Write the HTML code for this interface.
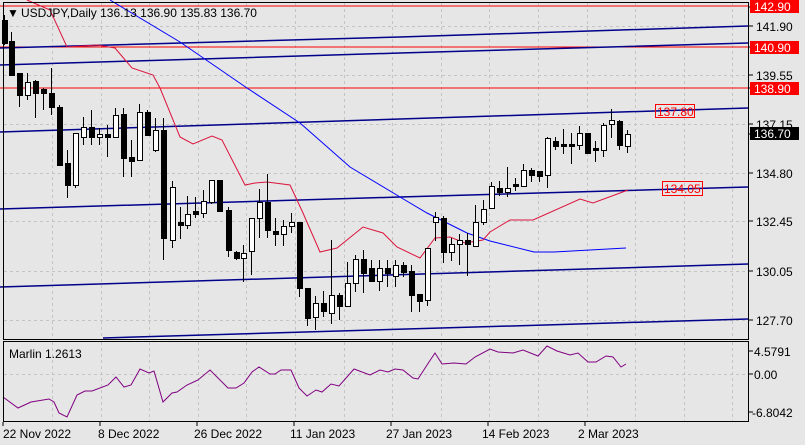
<!DOCTYPE html>
<html><head><meta charset="utf-8"><style>
html,body{margin:0;padding:0;background:#e6e6e6;width:805px;height:445px;overflow:hidden}
svg{display:block}
text{font-family:"Liberation Sans",sans-serif;font-size:12px}
</style></head><body>
<svg id="s" width="805" height="445" xmlns="http://www.w3.org/2000/svg">
<rect x="0" y="0" width="805" height="445" fill="#e6e6e6"/>
<g id="grid" stroke="#c4c4c4" stroke-dasharray="3,3" stroke-width="1"></g>
<g fill="none" stroke-width="1">
<polyline stroke="#ff0000" points="0,6 748,6"/>
<polyline stroke="#ff0000" points="0,47 748,47"/>
<polyline stroke="#ff0000" points="0,88 748,88"/>
</g>
<g fill="none" stroke="#00008b" stroke-width="1.5">
<polyline points="0,48 400,37 748,26"/>
<polyline points="0,65 400,53 748,43"/>
<polyline points="0,132 400,119 748,108"/>
<polyline points="0,209 400,197 748,187"/>
<polyline points="0,287 748,264"/>
<polyline points="103,338 748,319"/>
</g>
<polyline fill="none" stroke="#0000ff" stroke-width="1" points="110,0 180,42 247,88 300,123 350,167 400,197 427,213 467,233 490,241 534,252 554,252 626,248"/>
<polyline fill="none" stroke="#dc143c" stroke-width="1" points="27,0 50,10 67,47 97,45 115,48 132,68 153,75 160,88 180,137 193,144 212,136 222,140 245,185 255,183 267,182 290,185 297,200 303,213 320,252 337,248 363,227 383,233 397,247 420,258 435,238 450,237 465,243 483,240 490,232 510,220 533,220 580,199 593,203 620,193 628,190"/>
<g id="c"></g>
<rect x="655.5" y="104.5" width="39" height="13" fill="none" stroke="#ff0000"/>
<text x="657" y="116" fill="#ff0000">137.80</text>
<rect x="662.5" y="181.5" width="40" height="14" fill="none" stroke="#ff0000"/>
<text x="664" y="193" fill="#ff0000">134.05</text>
<polyline fill="none" stroke="#800080" stroke-width="1" points="3,397 18,408 31,402 49,399 54,402 59,413 67,417 77,395 85,391 92,391 108,385 116,377 124,387 131,385 140,369 149,373 154,371 163,402 172,393 177,392 187,385 198,380 210,370 228,388 236,388 244,383 252,372 259,367 270,374 275,374 281,370 291,370 299,388 307,396 316,390 322,392 331,384 339,386 354,369 370,375 380,370 388,372 395,369 403,370 413,378 418,379 429,362 435,353 442,364 454,363 466,364 475,357 490,349 498,352 513,353 523,350 538,356 547,346 557,351 570,355 578,353 588,362 596,362 606,356 613,357 621,367 626,364"/>
<!-- frames -->
<rect x="3.5" y="2.5" width="745" height="337" fill="none" stroke="#000"/>
<rect x="3.5" y="341.5" width="745" height="80" fill="none" stroke="#000"/>
<path d="M3 422v4M100 422v4M197 422v4M294 422v4M391 422v4M488 422v4M585 422v4M749 7h4M749 26h4M749 47h4M749 75h4M749 88h4M749 124h4M749 134h4M749 173h4M749 221h4M749 271h4M749 320h4M749 351h4M749 374h4M749 412h4" stroke="#000"/>
<text x="7" y="17" fill="#000">▼</text>
<text x="21" y="17" fill="#000">USDJPY,Daily  136.13 136.90 135.83 136.70</text>
<text x="9" y="358" fill="#000">Marlin 1.2613</text>
<rect x="750" y="0" width="49" height="13" fill="#ff0000"/><text x="754" y="11" fill="#fff">142.90</text>
<text x="756" y="31" fill="#000">141.90</text>
<rect x="750" y="41" width="49" height="13" fill="#ff0000"/><text x="754" y="52" fill="#fff">140.90</text>
<text x="756" y="80" fill="#000">139.55</text>
<rect x="750" y="82" width="49" height="13" fill="#ff0000"/><text x="754" y="93" fill="#fff">138.90</text>
<text x="756" y="129" fill="#000">137.15</text>
<rect x="750" y="127" width="49" height="13" fill="#000"/><text x="754" y="138" fill="#fff">136.70</text>
<text x="756" y="178" fill="#000">134.80</text>
<text x="756" y="226" fill="#000">132.45</text>
<text x="756" y="276" fill="#000">130.05</text>
<text x="756" y="325" fill="#000">127.70</text>
<text x="754" y="356" fill="#000">4.5791</text>
<text x="754" y="379" fill="#000">0.00</text>
<text x="752" y="417" fill="#000">-6.8042</text>
<text x="3" y="438" fill="#000">22 Nov 2022</text>
<text x="98" y="438" fill="#000">8 Dec 2022</text>
<text x="194" y="438" fill="#000">26 Dec 2022</text>
<text x="290" y="438" fill="#000">11 Jan 2023</text>
<text x="386" y="438" fill="#000">27 Jan 2023</text>
<text x="482" y="438" fill="#000">14 Feb 2023</text>
<text x="578" y="438" fill="#000">2 Mar 2023</text>
</svg>
<script>
var NS="http://www.w3.org/2000/svg";
var g=document.getElementById("grid"),h="";
for(var x=52;x<748;x+=48.6){h+='<line x1="'+Math.round(x)+'.5" y1="3" x2="'+Math.round(x)+'.5" y2="339"/><line x1="'+Math.round(x)+'.5" y1="342" x2="'+Math.round(x)+'.5" y2="421"/>';}
[26,75,124,173,221,271,320,374].forEach(function(y){h+='<line x1="4" y1="'+y+'.5" x2="748" y2="'+y+'.5"/>';});
g.innerHTML=h;
// x, hi, lo, bodyTop, bodyBot, white
var C=[[4,15,45,20,43,0],[11,32,75,41,75,0],[19,73,107,73,95,0],[27,73,100,82,95,1],[35,80,118,81,93,0],[43,88,110,89,93,0],[51,68,115,93,107,0],[59,105,165,107,165,0],[67,150,198,163,185,0],[75,148,188,133,185,1],[83,117,145,127,137,1],[91,110,145,127,137,0],[99,128,145,134,137,1],[107,125,157,134,137,0],[115,108,137,115,137,1],[123,108,177,114,158,0],[131,140,177,157,161,0],[139,104,160,112,160,1],[147,110,135,112,135,0],[155,118,152,130,150,1],[163,118,260,130,238,0],[172,181,248,187,240,1],[180,207,239,222,225,0],[187,196,229,214,225,1],[195,197,218,211,214,0],[203,190,218,201,213,1],[211,180,204,180,202,1],[219,180,212,180,211,0],[228,207,257,210,250,0],[236,251,260,252,258,0],[243,245,282,253,258,1],[251,218,275,218,251,1],[259,189,238,202,218,1],[267,174,238,202,230,0],[275,218,246,231,234,0],[283,220,246,226,234,1],[291,213,233,222,226,1],[299,222,297,222,288,0],[307,288,326,288,318,0],[315,296,330,303,317,1],[323,291,317,303,311,0],[331,240,324,295,313,1],[339,293,320,295,306,0],[347,262,306,283,306,1],[355,255,292,259,283,1],[363,250,293,259,273,0],[371,260,282,268,281,0],[379,260,291,268,281,1],[387,260,287,268,273,0],[395,260,287,265,276,1],[403,262,277,265,272,0],[411,265,312,271,295,0],[419,294,312,294,301,0],[427,248,306,248,300,1],[435,212,241,217,222,1],[443,216,263,218,252,0],[451,238,261,244,252,1],[459,234,265,240,244,1],[467,233,276,240,244,0],[475,205,247,222,246,1],[483,200,225,209,222,1],[491,182,208,186,208,1],[499,181,196,188,192,0],[507,167,197,188,192,1],[515,178,191,184,186,0],[523,164,187,170,186,1],[531,168,182,170,175,0],[539,171,182,171,176,0],[547,137,188,138,175,1],[555,137,150,141,146,0],[563,129,154,144,146,0],[571,133,164,144,146,0],[579,126,150,133,145,1],[587,133,154,133,153,0],[595,141,162,148,150,0],[603,123,157,125,150,1],[611,109,138,120,124,1],[619,120,150,121,145,0],[627,130,153,134,146,1]];
var s="";
C.forEach(function(c){var x=c[0]+.5;s+='<line x1="'+x+'" y1="'+c[1]+'" x2="'+x+'" y2="'+c[2]+'" stroke="#000"/>';
var hgt=Math.max(1,c[4]-c[3]);s+='<rect x="'+(c[0]-2)+'.5" y="'+c[3]+'.5" width="5" height="'+hgt+'" fill="'+(c[5]?'#fff':'#000')+'" stroke="#000"/>';});
document.getElementById("c").innerHTML=s;
</script>
</body></html>
